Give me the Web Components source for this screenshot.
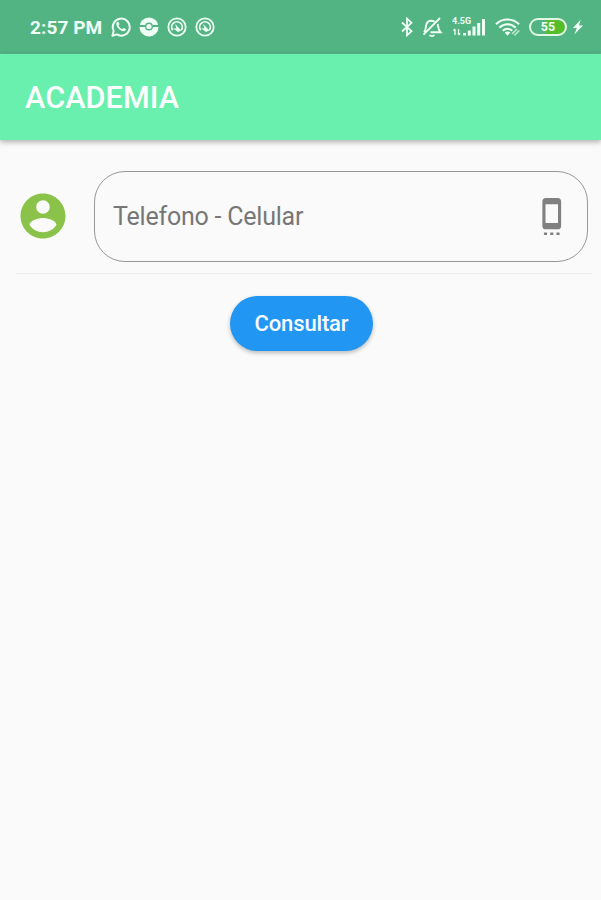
<!DOCTYPE html>
<html lang="es">
<head>
<meta charset="utf-8">
<title>Academia</title>
<style>
html,body{margin:0;height:100%;background:#fafafa}
body{font-family:Roboto,"Liberation Sans",sans-serif;overflow:hidden}
</style>
</head>
<body>
<academia-app></academia-app>
<script>
const define = (name, html) => {
  const t = document.createElement('template');
  t.innerHTML = html;
  customElements.define(name, class extends HTMLElement {
    constructor() {
      super();
      this.attachShadow({mode: 'open'}).append(t.content.cloneNode(true));
    }
  });
};

define('status-bar', `
<style>
:host{display:flex;justify-content:space-between;align-items:center;height:54px;box-sizing:border-box;padding:0 17px 0 30px;background:linear-gradient(#52b483 51px,#50ad80 53px,#5cc795);color:#effff6}
.left,.right{display:flex;align-items:center}
.time{font:700 19px/24px Roboto,"Liberation Sans",sans-serif;width:81px;white-space:nowrap;letter-spacing:.1px;padding-top:2px}
.left svg{width:20px;height:20px;margin-right:8px}
svg{display:block;flex:none}
.net{margin:0 9px;width:34px;height:22px}
.bat{display:flex;align-items:center;justify-content:center;box-sizing:border-box;width:38px;height:18px;border:2px solid #e3f8e4;border-radius:9px;margin:0 5px 0 8px;font:700 12.5px/14px Roboto,sans-serif;background:linear-gradient(90deg,#52b483 44%,#56bd2a 46%) padding-box}
</style>
<div class="left">
  <span class="time">2:57 PM</span>
  <svg viewBox="0 0 20 20" fill="none" stroke="currentColor"><path stroke-width="2" stroke-linejoin="round" d="M1.4 18.7 2.7 14a8.5 8.5 0 1 1 3.2 3.4z"/><path fill="currentColor" stroke="none" d="M7.4 5.1c-.5-.8-2.4.2-2.1 2.1.4 3.3 4 6.8 7.2 7.1 1.8.1 3-1.5 2.3-2.2l-2.1-1.1c-.6-.2-1 1.2-1.6 1-1.6-.6-2.8-1.7-3.5-3.3-.1-.5 1-.9.8-1.6z"/></svg>
  <svg viewBox="0 0 20 20"><circle cx="10" cy="10" r="9.5" fill="currentColor"/><path d="M0 9h6M14 9h6" stroke="#52b483" stroke-width="2"/><circle cx="10" cy="9.5" r="3.3" fill="currentColor" stroke="#52b483" stroke-width="1.4"/></svg>
  <svg viewBox="0 0 20 20" fill="none" stroke="currentColor"><circle cx="10" cy="10" r="8.7" stroke-width="1.8"/><path d="M5.7 13.2a5.3 5.3 0 1 1 8.6 0" stroke-width="1.7"/><path d="M8.2 7 14.3 13.4 11 15 6 11.2 9.3 11.4z" fill="currentColor" stroke="none"/></svg>
  <svg viewBox="0 0 20 20" fill="none" stroke="currentColor"><circle cx="10" cy="10" r="8.7" stroke-width="1.8"/><path d="M5.7 13.2a5.3 5.3 0 1 1 8.6 0" stroke-width="1.7"/><path d="M8.2 7 14.3 13.4 11 15 6 11.2 9.3 11.4z" fill="currentColor" stroke="none"/></svg>
</div>
<div class="right">
  <svg width="14" height="20" viewBox="0 0 14 20" fill="none" stroke="currentColor" stroke-width="1.8"><path d="M2 5.5l9.5 8.7L7 18.3V1.7l4.5 4.1L2 14.5"/></svg>
  <svg style="margin-left:7px" width="22" height="22" viewBox="0 0 22 22" fill="none" stroke="currentColor" stroke-width="1.9"><path d="M3 16.2c2-2 1.7-4.7 2.2-7.2.7-3 2.8-4.3 5-4.3 1.3 0 2.4.4 3.3 1.1M16.7 8c.6 2.8.4 5.8 2.8 8.2H9.5M8.5 19c1 1.4 3.8 1.4 4.8 0M19 2 2.5 18.7"/></svg>
  <svg class="net" viewBox="0 0 34 22" fill="currentColor"><text x="0" y="8" font-family="Roboto,sans-serif" font-weight="700" font-size="8.8" textLength="19" lengthAdjust="spacingAndGlyphs">4.5G</text><path d="M11 17h3v2.5h-3zM15.8 14.5h3v5h-3zM20.5 10.5h3v9h-3zM25.2 7h3v12.500h-3zM30 3h3v16.500h-3z"/><path d="M3 13v6M1.500 14.700 3 13M6.500 13v6M8 17.300 6.500 19" fill="none" stroke="currentColor" stroke-width="1.300"/></svg>
  <svg width="26" height="20" viewBox="0 0 26 20" fill="none" stroke="currentColor" stroke-width="2.2"><path d="M1 7.200c6.500-6.300 16.500-6.300 23 0M4.400 10.600c4.700-4.500 11.500-4.500 16.200 0M7.800 13.800c2.800-2.600 6.600-2.600 9.400 0"/><path d="M9.700 15.500q2.800-2 5.600 0l-2.800 3.200z" fill="currentColor" stroke="none"/><path d="M17 17l5-5M19.300 18.500l5-5" stroke="#bce8d0" stroke-width="1.700"/></svg>
  <div class="bat"><span>55</span></div>
  <svg width="12" height="16" viewBox="0 0 13 16"><path fill="currentColor" d="M9.500 0 1 9h4.200L2.500 16 12 6.500H7.600z"/></svg>
</div>`);

define('app-bar', `
<style>
:host{display:flex;align-items:center;height:86px;box-sizing:border-box;padding:1px 25px 0;background:#69f0ae;color:#fbfffd;font-size:30.5px;font-weight:500;letter-spacing:.12px;box-shadow:0 2px 5px rgba(0,0,0,.25),0 3px 7px rgba(0,0,0,.06)}
</style><slot></slot>`);

define('person-icon', `
<style>:host{display:block;width:54px;height:54px;padding-bottom:2px;color:#8bc34a}svg{display:block}</style>
<svg width="54" height="54" viewBox="0 0 24 24" fill="currentColor"><path d="M12 2C6.48 2 2 6.48 2 12s4.480 10 10 10 10-4.480 10-10S17.520 2 12 2zm0 3c1.660 0 3 1.340 3 3s-1.340 3-3 3-3-1.340-3-3 1.340-3 3-3zm0 14.200c-2.500 0-4.710-1.280-6-3.220.03-1.990 4-3.080 6-3.080 1.990 0 5.970 1.090 6 3.080-1.290 1.940-3.500 3.220-6 3.220z"/></svg>`);

define('phone-field', `
<style>
:host{display:flex;align-items:center;justify-content:space-between;flex:1;height:91px;box-sizing:border-box;padding:0 17px 0 18px;border:1.5px solid #979797;border-radius:31px;color:#777;font-size:25px;letter-spacing:-.22px}
svg{display:block}
</style>
<slot></slot>
<svg width="37.500" height="37.500" viewBox="0 0 24 24" fill="#808080"><path d="M7 22h2v2H7zM11 22h2v2h-2zM15 22h2v2h-2zM16 .01 8 0C6.900 0 6 .9 6 2v16c0 1.100.9 2 2 2h8c1.100 0 2-.9 2-2V2c0-1.100-.9-1.990-2-1.990zM16 16H8V4h8z"/></svg>`);

define('form-row', `
<style>:host{display:flex;align-items:center;gap:24px;margin:31px 9px 0 0;padding:0 4px 11px 0;border-bottom:1px solid #ececec}</style>
<slot></slot>`);

define('pill-button', `
<style>
:host{display:block}
button{display:block;width:143px;height:55px;padding:0;border:0;border-radius:28px;background:#2196f3;color:#fafdff;font:500 22px/55px Roboto,"Liberation Sans",sans-serif;letter-spacing:-.15px;box-shadow:0 2px 4px rgba(0,0,0,.26)}
</style><button><slot></slot></button>`);

define('academia-app', `
<style>
:host{display:block;height:900px;background:#fafafa}
main{padding-left:16px}
.actions{display:flex;justify-content:center;padding:21.5px 14px 0 0}
</style>
<status-bar></status-bar>
<app-bar>ACADEMIA</app-bar>
<main>
  <form-row><person-icon></person-icon><phone-field>Telefono - Celular</phone-field></form-row>
  <div class="actions"><pill-button>Consultar</pill-button></div>
</main>`);
</script>
</body>
</html>
